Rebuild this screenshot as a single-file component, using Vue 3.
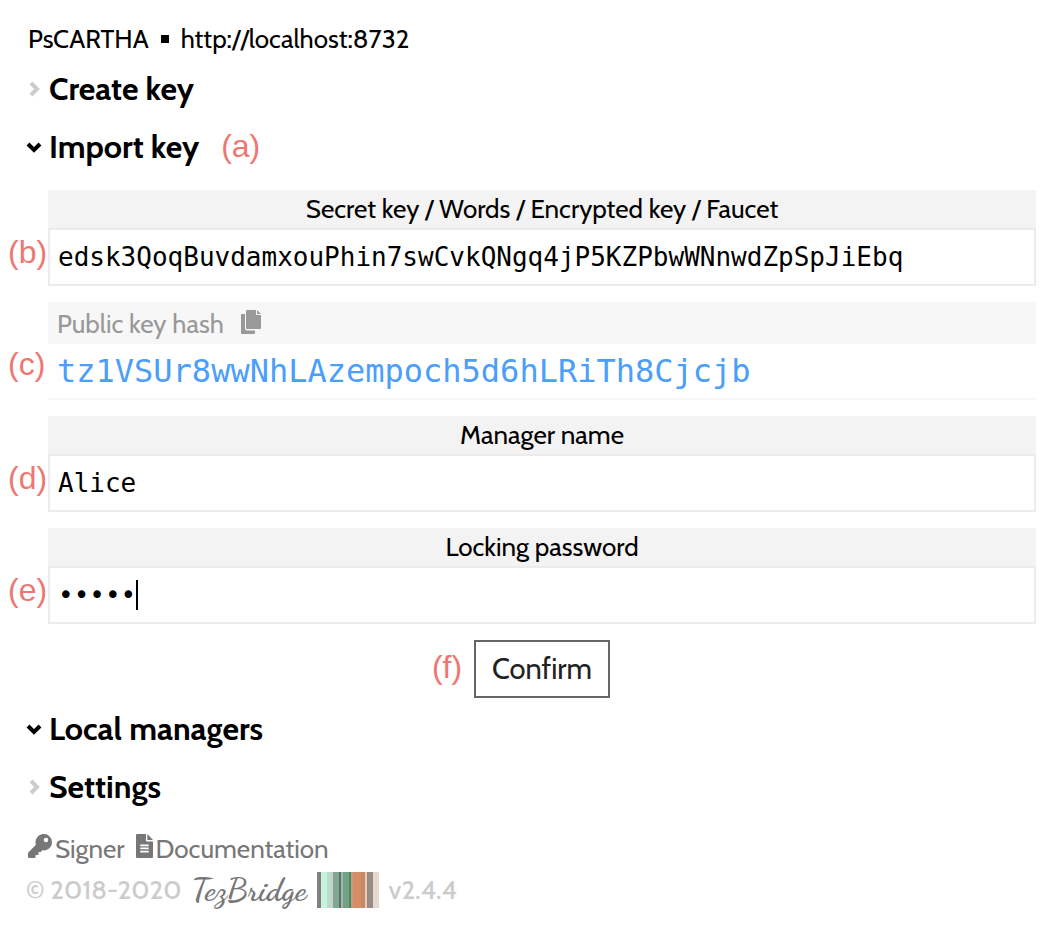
<script setup>
import { ref } from 'vue'

const secret = ref('edsk3QoqBuvdamxouPhin7swCvkQNgq4jP5KZPbwWNnwdZpSpJiEbq')
const manager = ref('Alice')
const password = ref('alice')

const stripes = [
  [4, '#808080'], [6, '#c9f2dc'], [2, '#a9e8c6'], [4, '#c9d1cc'], [6, '#7fa890'],
  [2, '#5d6f66'], [2, '#9dbba9'], [6, '#75a184'], [2, '#468a64'], [2, '#c99a7c'],
  [8, '#d68e62'], [4, '#c58a6a'], [2, '#eec9b0'], [6, '#968b87'], [6, '#e5d8cf']
]
</script>

<template>
  <div class="page">
    <header class="network">
      <span>PsCARTHA</span><i class="square"></i><span>http://localhost:8732</span>
    </header>

    <main>
      <h2 class="section">
        <button type="button" class="toggle" aria-expanded="false">
          <svg class="chevron closed" viewBox="0 0 16 16"><path d="M5 3l6 6L5 15" /></svg>
          <span>Create key</span>
        </button>
      </h2>

      <h2 class="section">
        <button type="button" class="toggle" aria-expanded="true">
          <svg class="chevron" viewBox="0 0 16 16"><path d="M2 6l6 6 6-6" /></svg>
          <span>Import key</span>
        </button>
        <span class="mark">(a)</span>
      </h2>

      <form class="form" @submit.prevent>
        <span class="mark">(b)</span>
        <div class="field">
          <label for="secret">Secret key / Words / Encrypted key / Faucet</label>
          <input id="secret" v-model="secret" type="text" spellcheck="false" />
        </div>

        <span class="mark">(c)</span>
        <div class="hash">
          <div class="hash-label">
            <span>Public key hash</span>
            <button type="button" class="copy" aria-label="Copy">
              <svg width="20" height="24" viewBox="0 0 20 24">
                <path d="M0 5a1 1 0 0 1 1-1h3v14.500a2 2 0 0 0 2 2h8V23a1 1 0 0 1-1 1H1a1 1 0 0 1-1-1z" />
                <path d="M5 1a1 1 0 0 1 1-1h9v5h5v13a1 1 0 0 1-1 1H6a1 1 0 0 1-1-1z" />
                <path d="M16 0l4 4h-4z" />
              </svg>
            </button>
          </div>
          <output class="hash-value">tz1VSUr8wwNhLAzempoch5d6hLRiTh8Cjcjb</output>
        </div>

        <span class="mark">(d)</span>
        <div class="field">
          <label for="manager">Manager name</label>
          <input id="manager" v-model="manager" type="text" />
        </div>

        <span class="mark">(e)</span>
        <div class="field">
          <label for="password">Locking password</label>
          <div class="entry" :style="{ '--count': password.length }">
            <input id="password" v-model="password" type="password" />
            <i class="caret"></i>
          </div>
        </div>

        <div class="actions">
          <span class="mark">(f)</span>
          <button type="submit" class="confirm">Confirm</button>
        </div>
      </form>

      <h2 class="section">
        <button type="button" class="toggle" aria-expanded="true">
          <svg class="chevron" viewBox="0 0 16 16"><path d="M2 6l6 6 6-6" /></svg>
          <span>Local managers</span>
        </button>
      </h2>

      <h2 class="section">
        <button type="button" class="toggle" aria-expanded="false">
          <svg class="chevron closed" viewBox="0 0 16 16"><path d="M5 3l6 6L5 15" /></svg>
          <span>Settings</span>
        </button>
      </h2>
    </main>

    <footer>
      <nav class="links">
        <a href="#signer">
          <svg width="24" height="24" viewBox="0 0 512 512"><path d="M512 176c0 97-79 176-176 176-11 0-22-1-33-3l-24 27a24 24 0 0 1-18 8h-37v40a24 24 0 0 1-24 24h-40v40a24 24 0 0 1-24 24H24a24 24 0 0 1-24-24v-78c0-6 3-12 7-17l162-162a176 176 0 1 1 343-55zM336 128a48 48 0 1 0 96 0 48 48 0 1 0-96 0z" /></svg>
          <span>Signer</span>
        </a>
        <a href="#documentation">
          <svg width="17" height="24" viewBox="0 0 384 512" preserveAspectRatio="none"><path fill-rule="evenodd" d="M224 136V0H24A24 24 0 0 0 0 24v464a24 24 0 0 0 24 24h336a24 24 0 0 0 24-24V160H248a24 24 0 0 1-24-24zM96 224h192v36H96zM96 290h192v36H96zM96 356h192v36H96zM256 0l128 128H256z" /></svg>
          <span>Documentation</span>
        </a>
      </nav>
      <div class="legal">
        <span>© 2018-2020</span>
        <span class="brand">TezBridge</span>
        <span class="stripes">
          <i v-for="(s, n) in stripes" :key="n" :style="{ width: s[0] + 'px', background: s[1] }"></i>
        </span>
        <span>v2.4.4</span>
      </div>
    </footer>
  </div>
</template>

<style>
body {
  background: #fff;
}
</style>

<style scoped>
* {
  box-sizing: border-box;
}

.page {
  padding: 18px 22px 16px 8px;
  color: #000;
  font-family: Cabin, Lato, sans-serif;
  font-size: 26px;
}

button {
  padding: 0;
  border: 0;
  background: none;
  color: inherit;
  font: inherit;
  cursor: pointer;
}

.network {
  display: flex;
  align-items: center;
  gap: 12px;
  height: 41px;
  padding-left: 20px;
}

.square {
  width: 8px;
  height: 8px;
  background: #000;
}

.section {
  display: flex;
  align-items: center;
  gap: 22px;
  height: 58px;
  margin: 0;
  padding-left: 18px;
  font-size: 32px;
  font-weight: 700;
}

.toggle {
  display: flex;
  align-items: center;
  gap: 7px;
}

.chevron {
  width: 16px;
  height: 16px;
  overflow: visible;
  fill: none;
  stroke: #000;
  stroke-width: 4;
}

.closed {
  stroke: #ccc;
}

.mark {
  color: #ee7772;
  font-family: "Liberation Sans", sans-serif;
  font-size: 32px;
  font-weight: 400;
  line-height: 36px;
}

.form {
  display: grid;
  grid-template-columns: 40px 1fr;
  row-gap: 16px;
  padding: 15px 0 1px;
}

.form > .mark {
  padding-top: 44px;
}

.field {
  display: flex;
  flex-direction: column;
}

.field label {
  height: 38px;
  background: #f3f3f3;
  line-height: 38px;
  text-align: center;
}

.field input {
  display: block;
  width: 100%;
  height: 58px;
  margin: 0;
  padding: 0 8px;
  border: 2px solid #ececec;
  border-radius: 0;
  outline: 0;
  background: #fff;
  color: #000;
  font-family: "DejaVu Sans Mono", monospace;
  font-size: 26px;
}

.entry {
  position: relative;
  font-family: "DejaVu Sans Mono", monospace;
}

.caret {
  position: absolute;
  top: 14px;
  left: calc(10px + var(--count) * 1ch);
  width: 2px;
  height: 30px;
  background: #000;
}

.hash {
  border-bottom: 2px solid #f7f7f7;
}

.hash-label {
  display: flex;
  align-items: center;
  gap: 17px;
  height: 42px;
  padding: 2px 9px 0;
  background: #f7f7f7;
  color: #999;
}

.copy {
  padding-bottom: 4px;
}

.copy svg {
  display: block;
  fill: #999;
}

.hash-value {
  display: block;
  height: 54px;
  padding-left: 9px;
  color: #4b9ef9;
  font-family: "DejaVu Sans Mono", monospace;
  font-size: 32px;
  line-height: 54px;
}

.actions {
  position: relative;
  grid-column: 2;
  justify-self: center;
}

.actions .mark {
  position: absolute;
  top: 9px;
  right: 100%;
  margin-right: 12px;
}

.confirm {
  height: 58px;
  padding: 0 16px 2px;
  border: 2px solid #666;
  color: #222;
  font-size: 29px;
}

footer {
  padding-left: 18px;
}

.links {
  display: flex;
  gap: 11px;
  align-items: center;
  height: 40px;
  margin-top: 14px;
  padding-left: 2px;
}

.links a {
  display: flex;
  gap: 3px;
  color: #777;
  text-decoration: none;
}

.links svg {
  margin-top: 1px;
  fill: #777;
}

.legal {
  display: flex;
  align-items: center;
  gap: 10px;
  height: 42px;
  color: #ccc;
}

.legal > span:first-child,
.legal > span:last-child {
  font-weight: 500;
}

.brand {
  color: #777;
  font-family: "Dancing Script", Lato, cursive;
  font-size: 32px;
  font-weight: 700;
}

.stripes {
  display: flex;
  height: 36px;
}
</style>
